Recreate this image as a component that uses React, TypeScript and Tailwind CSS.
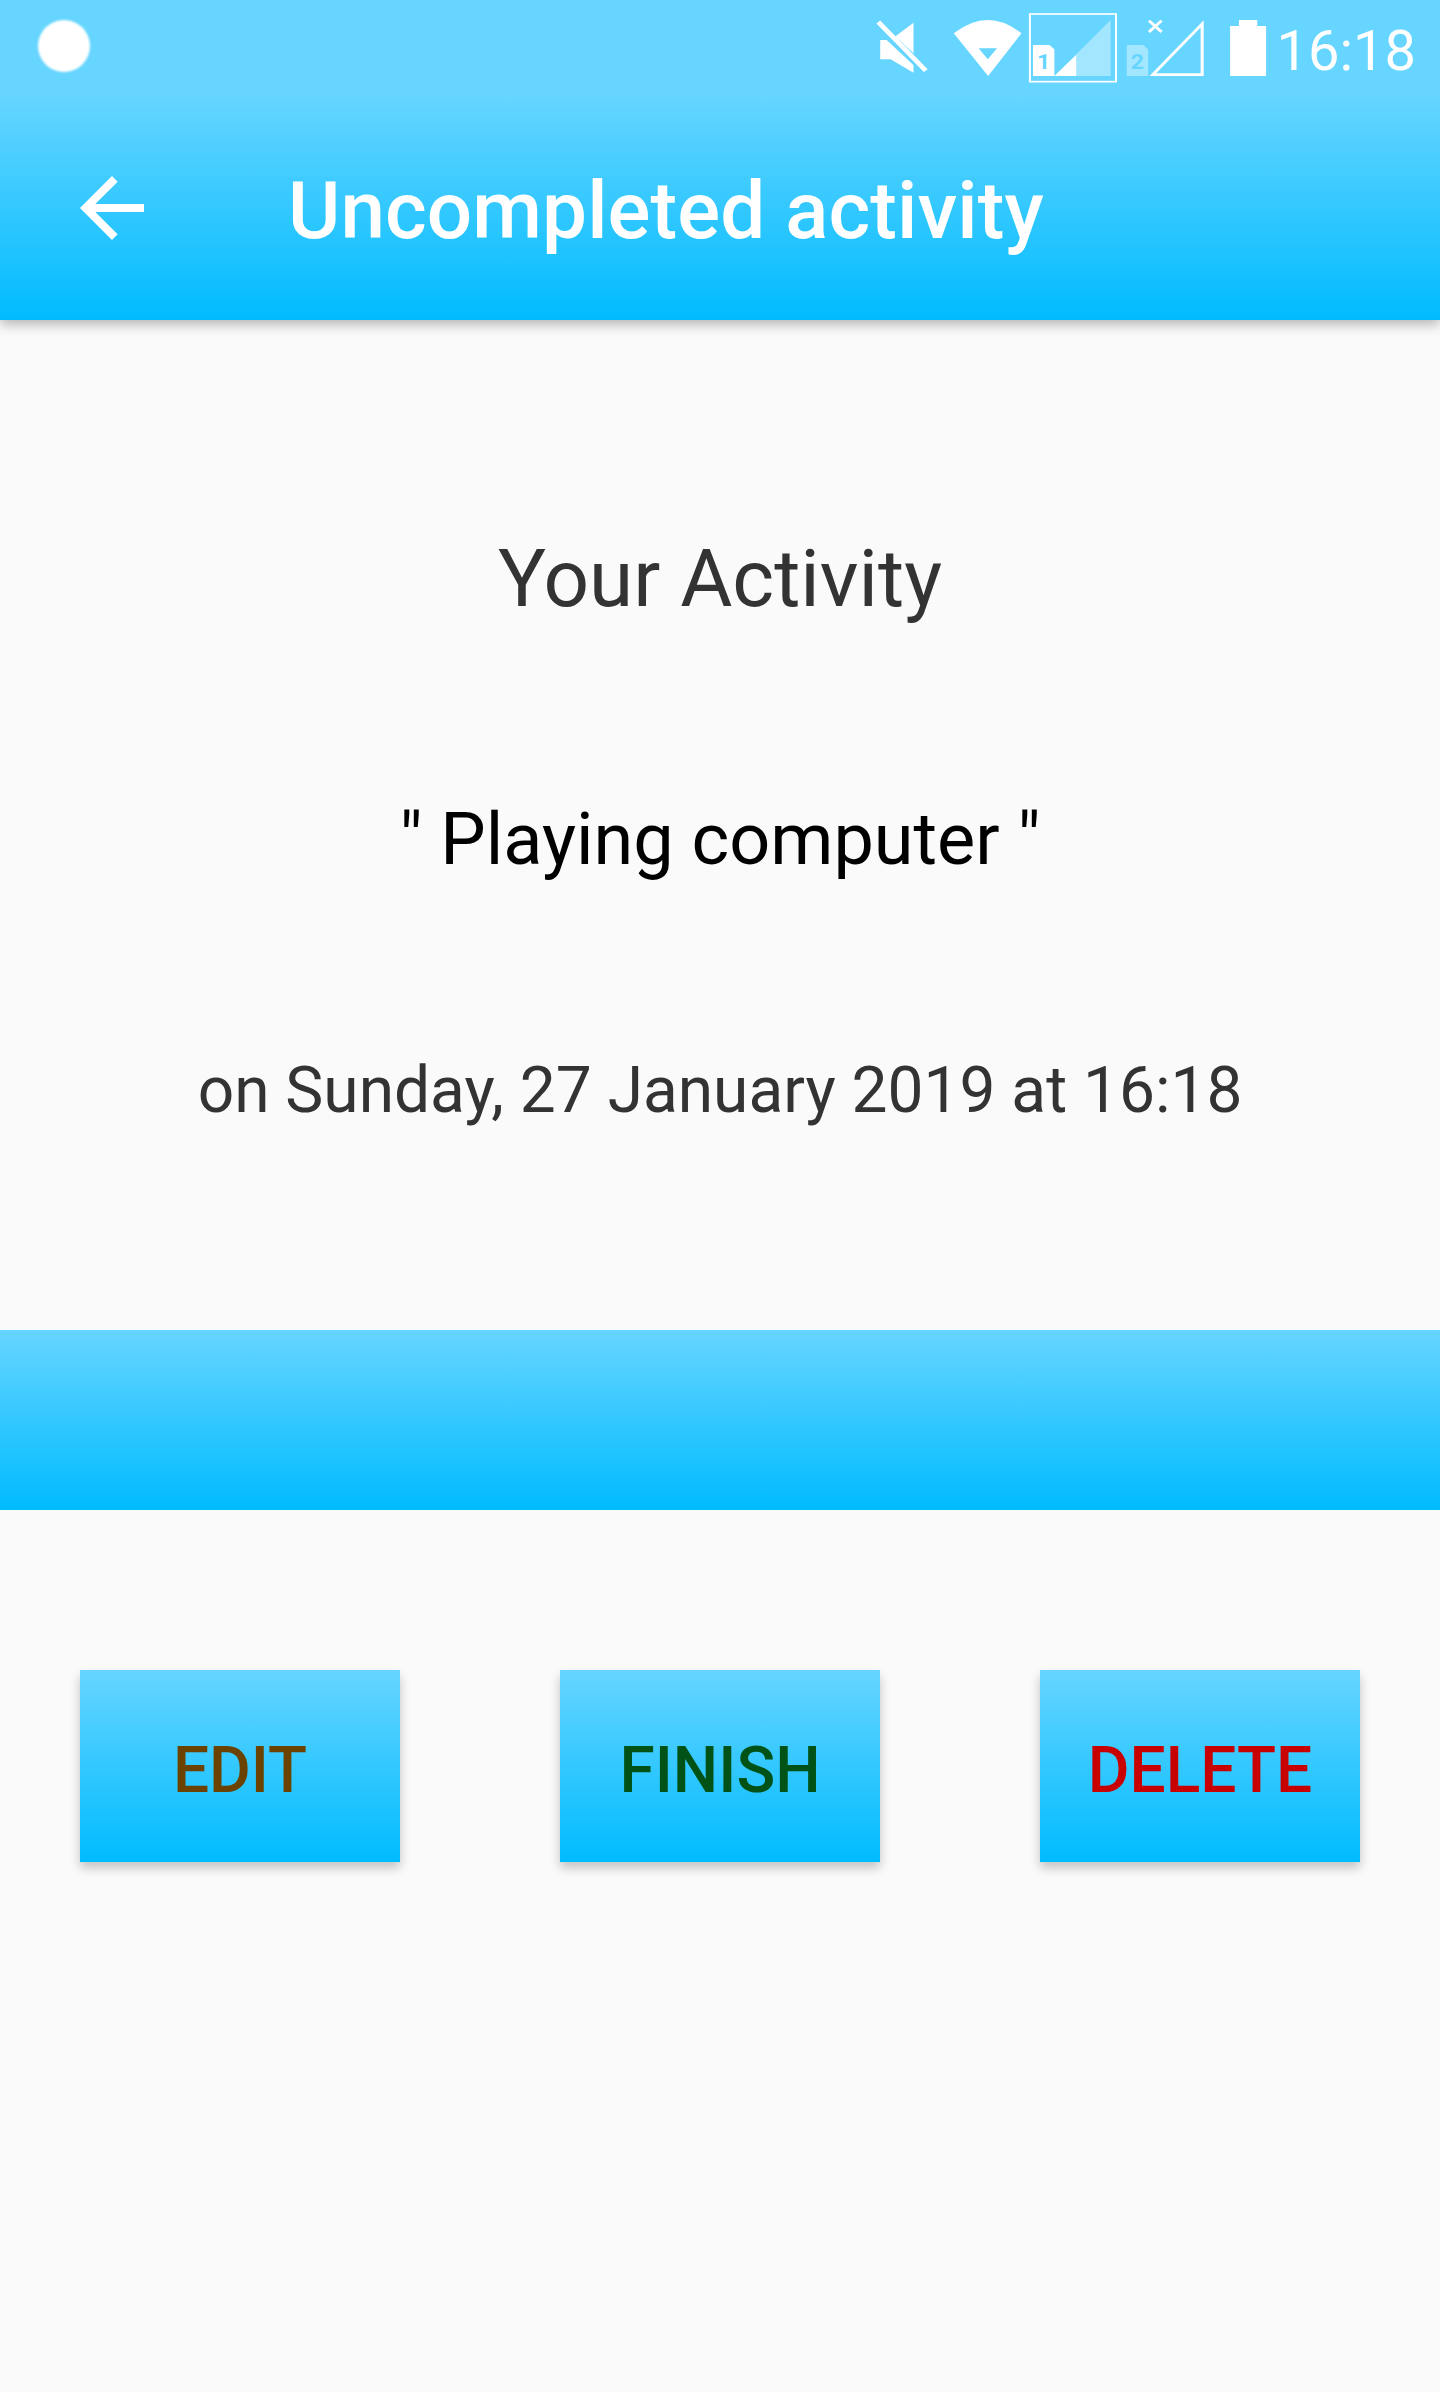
const roboto = "font-['Roboto',sans-serif]";

function StatusIcons() {
  return (
    <svg width="410" height="100" viewBox="0 0 1071 300" preserveAspectRatio="none" className="block">
      <g transform="translate(-92 0)">
        {/* mute */}
        <polygon points="103,120 130,120 190,68 190,218 130,178 103,178" fill="#fff" />
        <line x1="92" y1="72" x2="222" y2="212" stroke="#66d5ff" strokeWidth="24" />
        <line x1="98" y1="66" x2="222" y2="212" stroke="#fff" strokeWidth="13" />
        {/* wifi */}
        <path d="M295 100 Q385 20 472 100 L385 228 Z" fill="#fff" />
        <polygon points="360,145 408,145 384,178" fill="#66d5ff" />
        {/* sim 1 */}
        <rect x="494" y="42" width="225" height="203" fill="none" stroke="#fff" strokeWidth="5" />
        <polygon points="502,135 545,135 558,148 558,228 502,228" fill="#fff" />
        <text x="530" y="208" textAnchor="middle" fontFamily="Roboto" fontWeight="700" fontSize="60" fill="#66d5ff">1</text>
        <polygon points="558,228 705,60 705,228" fill="#fff" fillOpacity="0.4" />
        <polygon points="558,228 615,165 615,228" fill="#fff" />
        {/* sim 2 */}
        <polygon points="747,135 790,135 803,148 803,228 747,228" fill="#fff" fillOpacity="0.4" />
        <text x="775" y="208" textAnchor="middle" fontFamily="Roboto" fontWeight="700" fontSize="60" fill="#66d5ff">2</text>
        <polygon points="815,224 944,72 944,224" fill="none" stroke="#fff" strokeWidth="8" />
        <path d="M805 62 L838 96 M838 62 L805 96" stroke="#fff" strokeWidth="8" />
        {/* battery */}
        <polygon points="1017,78 1040,78 1040,60 1088,60 1088,78 1111,78 1111,228 1017,228" fill="#fff" />
      </g>
    </svg>
  );
}

function ActionButton({ label, color }: { label: string; color: string }) {
  return (
    <button className={`w-[320px] h-[192px] pt-[10px] bg-linear-to-b/srgb from-[#66d5ff] to-[#00bbff] shadow-[0_6px_10px_rgba(0,0,0,0.22)] text-[64px] font-medium ${color}`}>
      {label}
    </button>
  );
}

export default function App() {
  return (
    <div className={`min-h-[2392px] bg-[#fafafa] ${roboto}`}>
      {/* Header */}
      <header className="h-[320px] bg-linear-to-b/srgb from-[#66d5ff] from-30% to-[#00bbff] shadow-[0_4px_12px_rgba(0,0,0,0.3)] relative">
        <div className="h-[96px] flex items-center justify-between pl-[38px] pr-[24px]">
          <div className="w-[52px] h-[52px] rounded-full bg-white blur-[1px] mb-[4px]" />
          <div className="flex items-start h-full">
            <StatusIcons />
            <span className="-ml-[9px] text-[56px] text-white leading-[102px]">16:18</span>
          </div>
        </div>
        <div className="h-[224px] flex items-center pl-[64px]">
          <svg width="96" height="96" viewBox="0 0 24 24" fill="#fff">
            <path d="M20 11H7.83l5.59-5.59L12 4l-8 8 8 8 1.41-1.41L7.83 13H20v-2z" />
          </svg>
          <h1 className="ml-[128px] pt-[6px] text-[80px] font-medium text-white tracking-[0.08px]">Uncompleted activity</h1>
        </div>
      </header>

      {/* Activity */}
      <main className="flex flex-col items-center">
        <p className="mt-[212px] text-[80px] leading-[94px] text-[#333333]">Your Activity</p>
        <p className="mt-[172px] text-[72px] leading-[84px] text-black">" Playing computer "</p>
        <p className="mt-[171px] text-[64px] leading-[76px] text-[#333333]">on Sunday, 27 January 2019 at 16:18</p>
      </main>

      <div className="mt-[201px] h-[180px] bg-linear-to-b/srgb from-[#66d5ff] to-[#00bbff]" />

      <div className="mt-[160px] px-[80px] flex justify-between">
        <ActionButton label="EDIT" color="text-[#6b4200]" />
        <ActionButton label="FINISH" color="text-[#005216]" />
        <ActionButton label="DELETE" color="text-[#c80000]" />
      </div>
    </div>
  );
}
